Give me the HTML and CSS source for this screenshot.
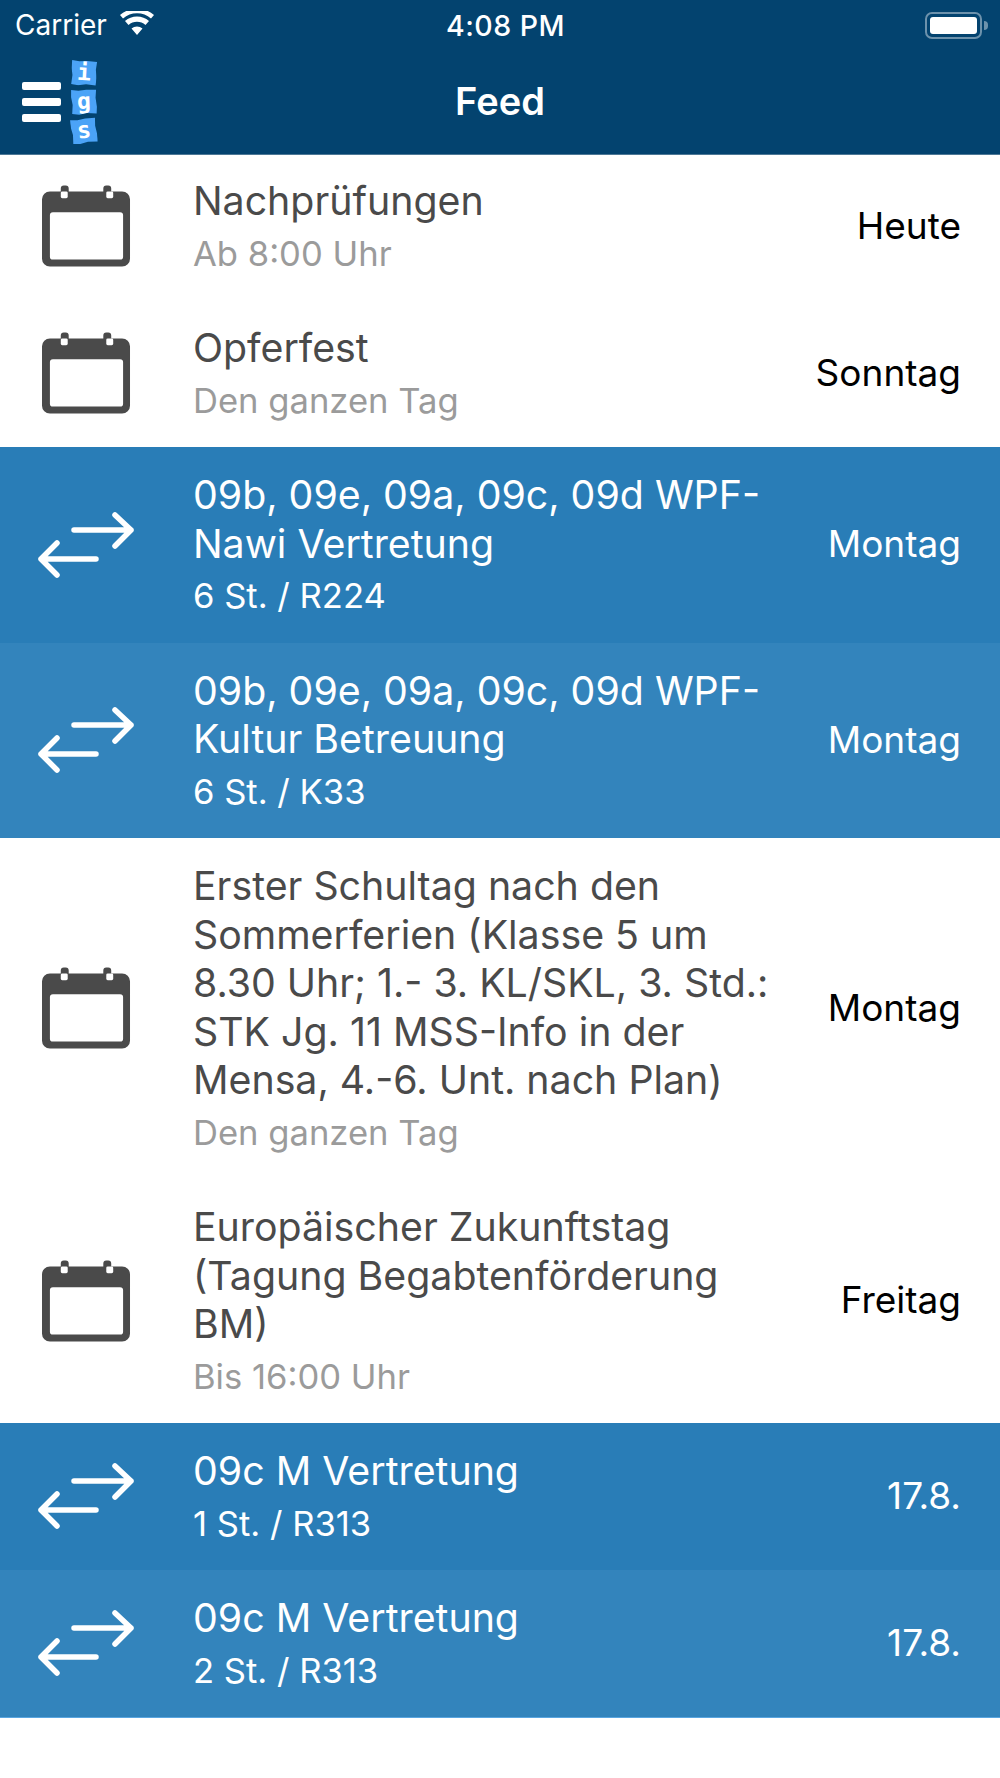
FILE: index.html
```html
<!DOCTYPE html>
<html>
<head>
  <title>Feed</title>
  <link rel="stylesheet" href="styles.css">
</head>
<body>
  <svg class="defs" width="0" height="0">
    <symbol id="cal" viewBox="0 0 90 82">
      <path fill-rule="evenodd" d="M8 6h11V3a3 3 0 0 1 3-3h2a3 3 0 0 1 3 3v3h35V3a3 3 0 0 1 3-3h2a3 3 0 0 1 3 3v3h11a8 8 0 0 1 8 8v60a8 8 0 0 1-8 8H8a8 8 0 0 1-8-8V14a8 8 0 0 1 8-8zM8 30v42a3 3 0 0 0 3 3h68a3 3 0 0 0 3-3V30a3 3 0 0 0-3-3H11a3 3 0 0 0-3 3z"/>
      <rect x="19" y="6" width="7" height="7" rx="1.5" fill="#fff"/>
      <rect x="65" y="6" width="7" height="7" rx="1.5" fill="#fff"/>
    </symbol>
    <symbol id="swap" viewBox="0 0 96 66">
      <path d="M36 18h57M77 3l16 15-16 16M58 47H3M19 31 3 47l16 16" fill="none" stroke="#fff" stroke-width="5.500" stroke-linecap="round" stroke-linejoin="round"/>
    </symbol>
  </svg>

  <header class="topbar">
    <div class="status">
      <div class="status-left">
        <span>Carrier</span>
        <svg class="wifi" viewBox="0 0 34 24">
          <path d="M17 24 11.500 17.500a8.500 8.500 0 0 1 11 0zM8.500 14 5 10a18 18 0 0 1 24 0l-3.500 4a13 13 0 0 0-17 0zM3 7.500 0 4a26 26 0 0 1 34 0l-3 3.500a21 21 0 0 0-28 0z" fill="#fff"/>
        </svg>
      </div>
      <div class="clock">4:08 PM</div>
      <div class="status-right">
        <div class="battery"><div class="battery-fill"></div></div>
        <div class="battery-tip"></div>
      </div>
    </div>
    <div class="navbar">
      <div class="nav-left">
        <div class="burger"><i></i><i></i><i></i></div>
        <div class="logo">
          <span class="logo-i">i</span>
          <span class="logo-g">g</span>
          <span class="logo-s">s</span>
        </div>
      </div>
      <h1>Feed</h1>
      <div></div>
    </div>
  </header>

  <main>
    <div class="row">
      <svg class="icon-cal"><use href="#cal"/></svg>
      <div class="text">
        <div class="title">Nachprüfungen</div>
        <div class="sub">Ab 8:00 Uhr</div>
      </div>
      <div class="when">Heute</div>
    </div>
    <div class="row">
      <svg class="icon-cal"><use href="#cal"/></svg>
      <div class="text">
        <div class="title">Opferfest</div>
        <div class="sub">Den ganzen Tag</div>
      </div>
      <div class="when">Sonntag</div>
    </div>
    <div class="row blue">
      <svg class="icon-swap"><use href="#swap"/></svg>
      <div class="text">
        <div class="title">09b, 09e, 09a, 09c, 09d WPF-<br>Nawi Vertretung</div>
        <div class="sub">6 St. / R224</div>
      </div>
      <div class="when">Montag</div>
    </div>
    <div class="row blue alt">
      <svg class="icon-swap"><use href="#swap"/></svg>
      <div class="text">
        <div class="title">09b, 09e, 09a, 09c, 09d WPF-<br>Kultur Betreuung</div>
        <div class="sub">6 St. / K33</div>
      </div>
      <div class="when">Montag</div>
    </div>
    <div class="row">
      <svg class="icon-cal"><use href="#cal"/></svg>
      <div class="text">
        <div class="title">Erster Schultag nach den<br>Sommerferien (Klasse 5 um<br>8.30 Uhr; 1.- 3. KL/SKL, 3. Std.:<br>STK Jg. 11 MSS-Info in der<br>Mensa, 4.-6. Unt. nach Plan)</div>
        <div class="sub">Den ganzen Tag</div>
      </div>
      <div class="when">Montag</div>
    </div>
    <div class="row">
      <svg class="icon-cal"><use href="#cal"/></svg>
      <div class="text">
        <div class="title">Europäischer Zukunftstag<br>(Tagung Begabtenförderung<br>BM)</div>
        <div class="sub">Bis 16:00 Uhr</div>
      </div>
      <div class="when">Freitag</div>
    </div>
    <div class="row blue">
      <svg class="icon-swap"><use href="#swap"/></svg>
      <div class="text">
        <div class="title">09c M Vertretung</div>
        <div class="sub">1 St. / R313</div>
      </div>
      <div class="when">17.8.</div>
    </div>
    <div class="row blue alt">
      <svg class="icon-swap"><use href="#swap"/></svg>
      <div class="text">
        <div class="title">09c M Vertretung</div>
        <div class="sub">2 St. / R313</div>
      </div>
      <div class="when">17.8.</div>
    </div>
  </main>
</body>
</html>
```

FILE: styles.css
```css
body {
  font-family: Inter, "Liberation Sans", sans-serif;
  background-color: #fff;
  margin: 0;
  padding: 0;
}

.defs {
  position: absolute;
}

.topbar {
  position: relative;
  z-index: 1;
  background-color: #03436f;
  color: #fff;
  height: 154px;
  border-bottom: 1px solid #4d7896;
}

.status {
  display: grid;
  grid-template-columns: 1fr auto 1fr;
  align-items: center;
  height: 50px;
  padding: 0 12px 0 15px;
  font-size: 28px;
}

.status-left {
  display: flex;
  align-items: center;
  gap: 13px;
}

.wifi {
  width: 34px;
  height: 24px;
  margin-bottom: 4px;
}

.clock {
  margin-left: 8px;
  font-size: 28.500px;
  font-weight: 500;
  letter-spacing: 0.500px;
}

.status-right {
  display: flex;
  align-items: center;
  justify-content: flex-end;
  gap: 2px;
}

.battery {
  box-sizing: border-box;
  width: 57px;
  height: 27px;
  padding: 3px;
  border: 2px solid #6d92ac;
  border-radius: 7px;
}

.battery-fill {
  height: 100%;
  background-color: #fff;
  border-radius: 3px;
}

.battery-tip {
  width: 4px;
  height: 9px;
  background-color: #6d92ac;
  border-radius: 0 4px 4px 0;
}

.navbar {
  display: grid;
  grid-template-columns: 1fr auto 1fr;
  align-items: center;
  height: 104px;
}

.navbar h1 {
  margin: 0 0 2px;
  font-size: 38px;
  font-weight: 600;
}

.nav-left {
  display: flex;
  align-items: center;
  gap: 10px;
  padding-left: 22px;
}

.burger {
  display: flex;
  flex-direction: column;
  gap: 8px;
}

.burger i {
  display: block;
  width: 39px;
  height: 8px;
  background-color: #fff;
  border-radius: 2px;
}

.logo {
  display: flex;
  flex-direction: column;
  gap: 3px;
  margin-bottom: 1px;
  font-family: "DejaVu Sans Mono", monospace;
  font-size: 23px;
  font-weight: 700;
}

.logo span {
  width: 26px;
  height: 26px;
  line-height: 25px;
  text-align: center;
  background-color: #4ba3f7;
  clip-path: polygon(2% 2%, 30% 6%, 60% 3%, 98% 5%, 95% 35%, 99% 70%, 97% 96%, 60% 93%, 30% 98%, 3% 95%, 6% 60%, 1% 30%);
}

.logo-i {
  transform: rotate(3deg);
}

.logo-g {
  transform: rotate(-2deg);
}

.logo-s {
  transform: rotate(-7deg);
}

main {
  margin-top: -2px;
  border-bottom: 1px solid #5aa5e0;
}

.row {
  display: flex;
  align-items: center;
  padding: 21px 39px 21.500px 0;
  background-color: #fff;
}

.row.blue {
  background-color: #297db7;
  color: #fff;
}

.row.alt {
  background-color: #3384bc;
}

.icon-cal,
.icon-swap {
  flex: none;
  width: 89px;
  height: 82px;
  margin: 0 62px 0 42px;
  fill: #4a4a4a;
}

.icon-swap {
  width: 96px;
  height: 66px;
  margin: 0 59px 0 38px;
}

.text {
  flex: 1;
  margin-top: 3px;
}

.title {
  font-size: 39.300px;
  line-height: 48.500px;
  color: #4a4a4a;
}

.sub {
  margin-top: 1px;
  font-size: 34.600px;
  line-height: 52px;
  color: #9b9b9b;
}

.blue .title,
.blue .sub {
  color: #fff;
}

.when {
  margin-bottom: 2px;
  font-size: 37px;
  color: #000;
}

.blue .when {
  color: #fff;
}
```
